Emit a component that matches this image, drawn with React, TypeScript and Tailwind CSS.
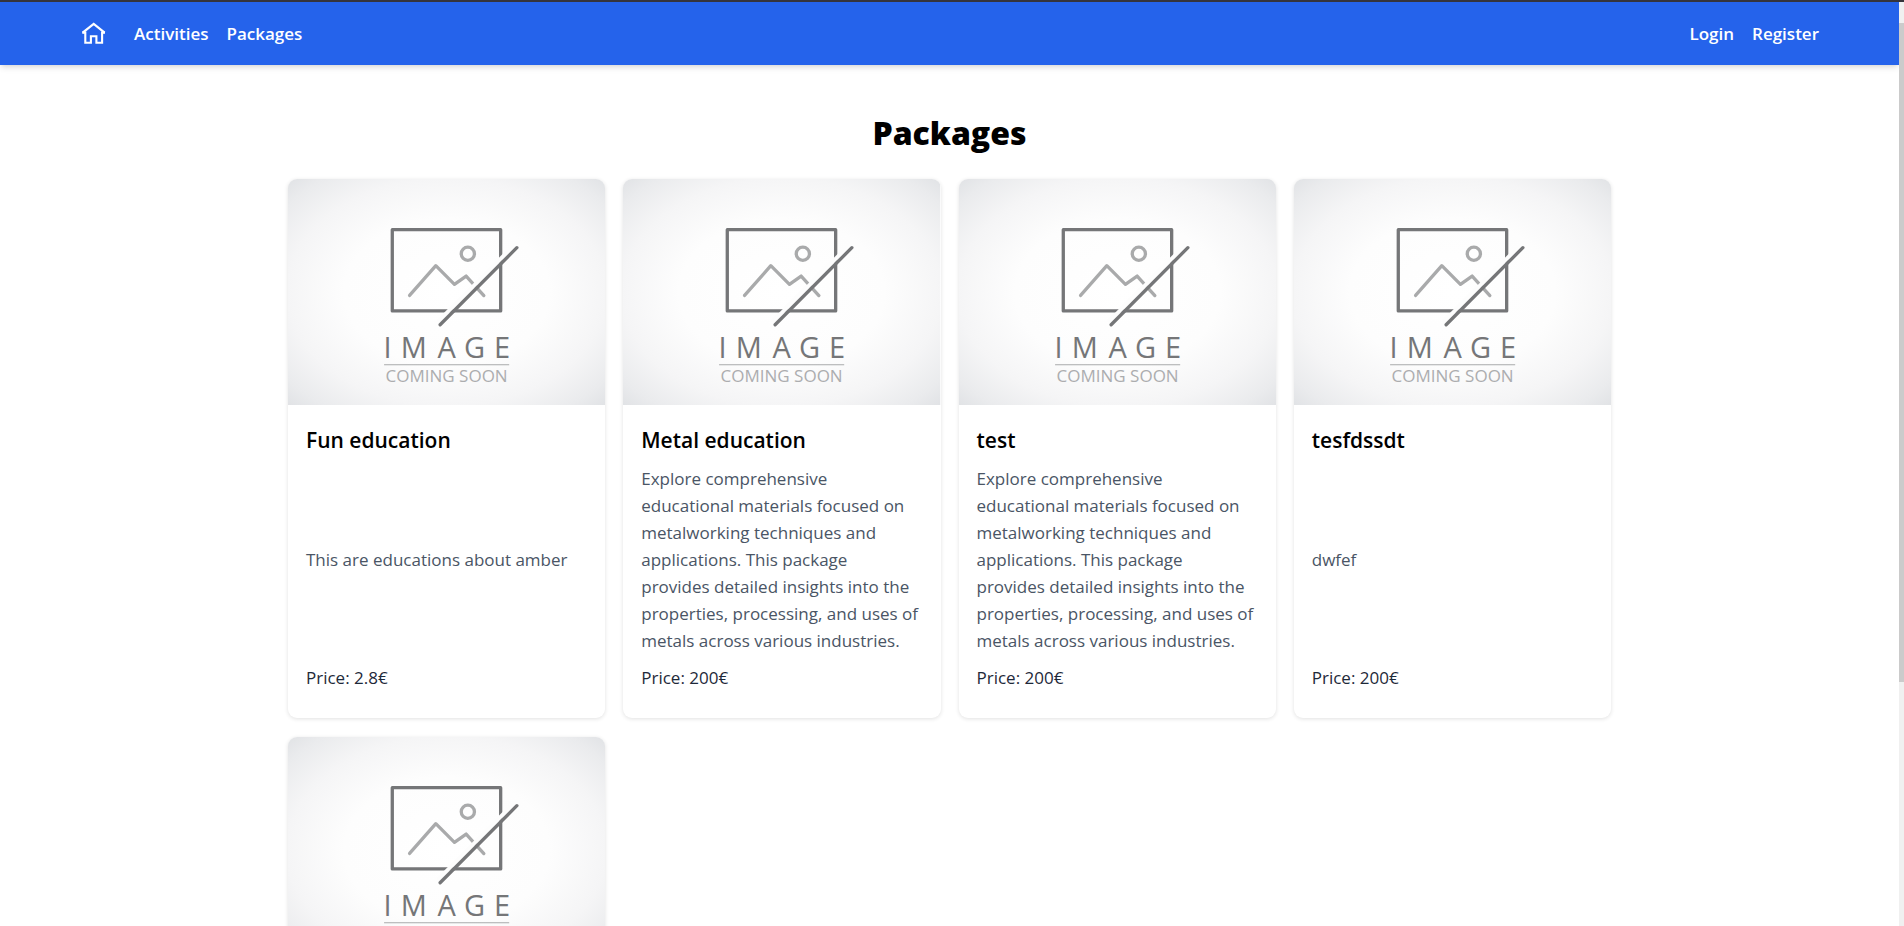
type Package = {
  id: number;
  title?: string;
  description?: string;
  price?: string;
};

const metalText =
  "Explore comprehensive educational materials focused on metalworking techniques and applications. This package provides detailed insights into the properties, processing, and uses of metals across various industries.";

const packages: Package[] = [
  { id: 1, title: "Fun education", description: "This are educations about amber", price: "2.8" },
  { id: 2, title: "Metal education", description: metalText, price: "200" },
  { id: 3, title: "test", description: metalText, price: "200" },
  { id: 4, title: "tesfdssdt", description: "dwfef", price: "200" },
  { id: 5 },
];

function HomeIcon() {
  return (
    <svg
      viewBox="10 10 27 27"
      width="27"
      height="27"
      fill="none"
      stroke="currentColor"
      strokeWidth="2.2"
      aria-hidden="true"
    >
      <path d="M12.2 22.6H15.3V32.8H20.9V26.2H26.4V32.8H32.1V22.6H35" strokeWidth="2.1" />
      <path d="M12.7 22.6 23.7 13.8 34.6 22.6" />
    </svg>
  );
}

function Placeholder({ id }: { id: number }) {
  const gradient = `vignette-${id}`;
  return (
    <svg viewBox="0 0 317 226" className="block w-full" role="img">
      <defs>
        <radialGradient id={gradient} cx="50%" cy="50%" r="72%">
          <stop offset="0" stopColor="#ffffff" />
          <stop offset="0.45" stopColor="#fdfdfd" />
          <stop offset="0.7" stopColor="#f5f5f6" />
          <stop offset="0.88" stopColor="#eaebed" />
          <stop offset="1" stopColor="#dfe1e4" />
        </radialGradient>
      </defs>
      <rect width="317" height="226" fill={`url(#${gradient})`} />
      <g fill="none" strokeWidth="3.3" strokeLinecap="round" strokeLinejoin="round">
        <rect x="104.2" y="50.6" width="108.3" height="81.2" stroke="#757678" />
        <circle cx="179.7" cy="74.7" r="6.6" stroke="#a9aaab" />
        <path d="M121.5 116.3 147.7 86.6 166.3 105.3 178 97 195.7 116.5" stroke="#a9aaab" />
        <path d="M149.4 143.1 226.1 66.1" stroke="#fdfdfd" strokeWidth="4" strokeLinecap="butt" />
        <path d="M152 145.6 228.7 68.6" stroke="#757678" />
      </g>
      <text
        x="99.5 125.8 158.5 186.5 214"
        y="179"
        textAnchor="middle"
        fontSize="29"
        fontWeight="500"
        fill="#757678"
      >
        IMAGE
      </text>
      <path d="M96 185.5H221" stroke="#a9aaab" strokeWidth="1" />
      <text x="158.5" y="203" textAnchor="middle" fontSize="17" fill="#acadaf">
        COMING SOON
      </text>
    </svg>
  );
}

function PackageCard({ item }: { item: Package }) {
  return (
    <article className="flex flex-col overflow-hidden rounded-[9px] bg-white shadow-[0_1px_4px_rgba(0,0,0,0.12)]">
      <Placeholder id={item.id} />
      {item.title && (
        <div className="flex grow flex-col justify-between px-[18px] pt-[19px] pb-[27px]">
          <h2 className="mb-[9px] text-[21px] leading-8 font-semibold text-black">{item.title}</h2>
          <p className="mb-[10px] pr-[3px] text-[17px] leading-[27px] text-gray-600">
            {item.description}
          </p>
          <p className="text-[17px] leading-[27px] text-gray-800">Price: {item.price}€</p>
        </div>
      )}
    </article>
  );
}

export default function App() {
  return (
    <div className="flex h-screen flex-col border-t-2 border-[#35343c] bg-white font-['Open_Sans','Noto_Sans',sans-serif]">
      <div className="flex min-h-0 grow">
        <div className="min-w-0 grow overflow-y-auto [scrollbar-width:none]">
          <nav className="flex h-[63px] items-center justify-between bg-[#2563eb] px-20 text-[17px] font-semibold text-white shadow-md">
            <div className="flex items-center gap-[18px]">
              <a href="#home" aria-label="Home" className="mr-[9px]">
                <HomeIcon />
              </a>
              <a href="#activities">Activities</a>
              <a href="#packages">Packages</a>
            </div>
            <div className="flex items-center gap-[18px]">
              <a href="#login">Login</a>
              <a href="#register">Register</a>
            </div>
          </nav>
          <main className="mx-auto max-w-[1323px] pt-12 pb-9">
            <h1 className="mb-[26px] text-center text-[32px] leading-10 font-extrabold text-black">
              Packages
            </h1>
            <div className="grid grid-cols-4 gap-x-[18px] gap-y-[19px]">
              {packages.map((item) => (
                <PackageCard key={item.id} item={item} />
              ))}
            </div>
          </main>
        </div>
        <div className="flex w-[5px] shrink-0 flex-col bg-[#f0f0f0] pt-[21px]" aria-hidden="true">
          <div className="h-[73%] bg-[#cbcbcb]" />
        </div>
      </div>
    </div>
  );
}
